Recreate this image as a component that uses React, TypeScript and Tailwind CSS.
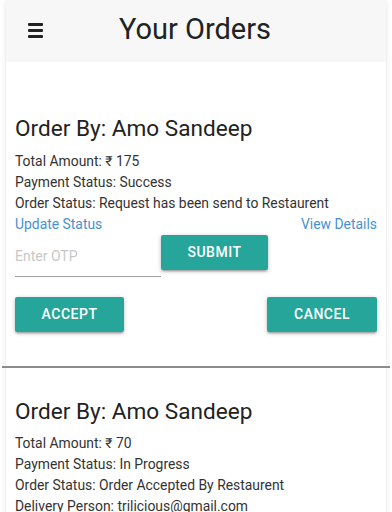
import React from "react";

const btn =
  "h-[35px] bg-[#26a69a] text-white text-[14px] font-medium uppercase tracking-[0.5px] rounded-[2px] shadow-[0_2px_2px_0_rgba(0,0,0,0.14),0_3px_1px_-2px_rgba(0,0,0,0.12),0_1px_5px_0_rgba(0,0,0,0.2)] flex items-center justify-center";

function Line({ children }: { children: React.ReactNode }) {
  return <div className="text-[13.9px] leading-[21px] text-[#333]">{children}</div>;
}

export default function App() {
  return (
    <div
      className="w-[392px] h-[512px] overflow-hidden bg-white"
      style={{ fontFamily: "Roboto, 'Noto Sans', sans-serif" }}
    >
      <div className="mx-[6px] min-h-full bg-white shadow-[0_0_5px_rgba(0,0,0,0.12)]">
        <header className="h-[62px] bg-[#f7f7f7] flex items-center px-[22px]">
          <div className="w-[15px] flex flex-col gap-[3.5px] -mt-[1px]">
            <span className="block h-[2.5px] bg-[#222] rounded-[1px]" />
            <span className="block h-[2.5px] bg-[#222] rounded-[1px]" />
            <span className="block h-[2.5px] bg-[#222] rounded-[1px]" />
          </div>
          <h1 className="flex-1 text-center text-[29px] leading-[34px] text-[#222] -mt-[4px] pr-[2px]">
            Your Orders
          </h1>
          <div className="w-[15px]" />
        </header>

        <section className="px-[9px] pt-[51px]">
          <h2 className="text-[22.6px] leading-[32px] text-[#222] mb-[6px]">Order By: Amo Sandeep</h2>
          <Line>Total Amount: ₹ 175</Line>
          <Line>Payment Status: Success</Line>
          <Line>Order Status: Request has been send to Restaurent</Line>
          <div className="flex justify-between text-[13.9px] leading-[21px] text-[#4a90d0]">
            <span>Update Status</span>
            <span>View Details</span>
          </div>
          <div className="flex items-start">
            <div className="w-[146px] h-[42px] border-b border-[#9e9e9e] flex items-center text-[14px] text-[#c8c8c8] pt-[1px]">
              Enter OTP
            </div>
            <button className={`${btn} w-[107px]`}>Submit</button>
          </div>
          <div className="flex justify-between mt-[20px]">
            <button className={`${btn} w-[109px]`}>Accept</button>
            <button className={`${btn} w-[110px]`}>Cancel</button>
          </div>
        </section>

        <div className="mt-[34px] -mx-[4px] h-[1.5px] bg-[#8c8c8c]" />

        <section className="px-[9px] pt-[28px]">
          <h2 className="text-[22.6px] leading-[32px] text-[#222] mb-[5px]">Order By: Amo Sandeep</h2>
          <Line>Total Amount: ₹ 70</Line>
          <Line>Payment Status: In Progress</Line>
          <Line>Order Status: Order Accepted By Restaurent</Line>
          <Line>Delivery Person: trilicious@gmail.com</Line>
        </section>
      </div>
    </div>
  );
}
